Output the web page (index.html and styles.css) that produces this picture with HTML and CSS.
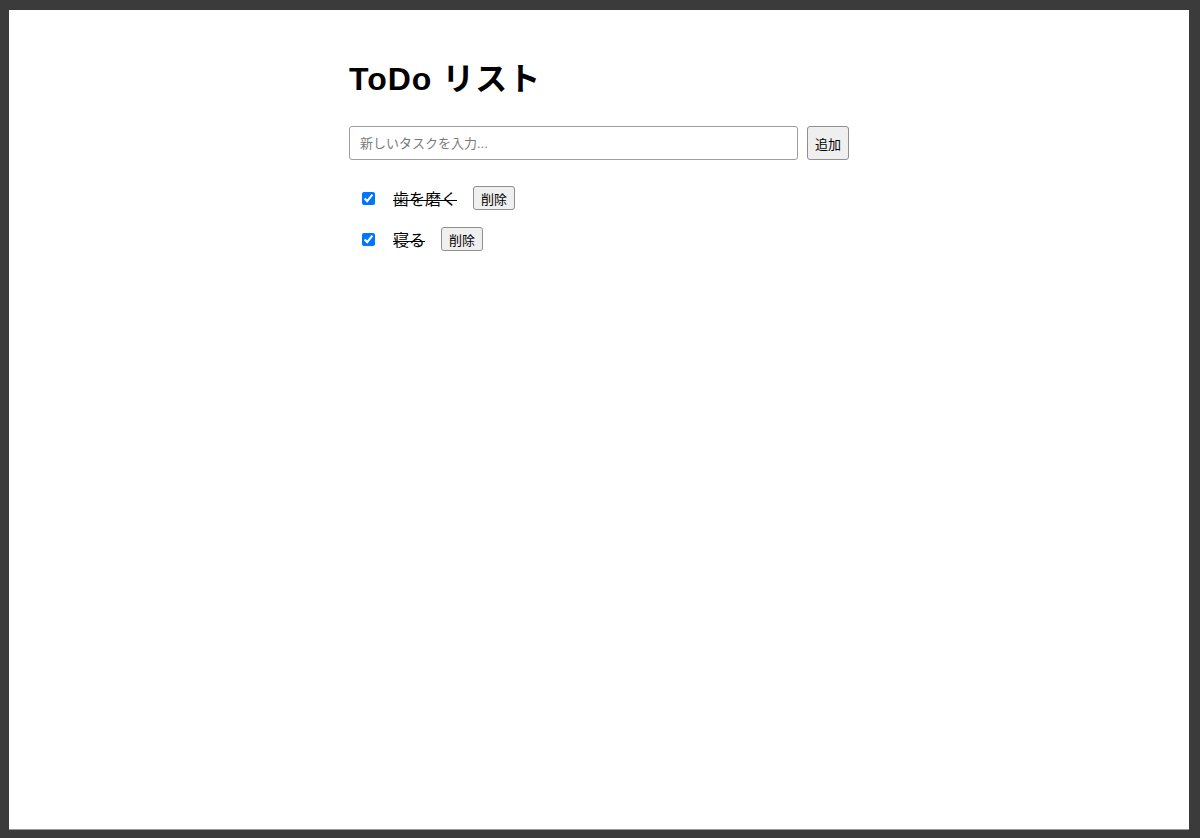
FILE: index.html
```
<!DOCTYPE html>
<html lang="ja">
<head>
    <meta charset="UTF-8">
    <meta name="viewport" content="width=device-width, initial-scale=1.0">
    <title>ToDo リスト</title>
    <link rel="stylesheet" href="styles.css">
</head>
<body>
    <div class="page">
        <div class="container">
            <h1>ToDo リスト</h1>
            <form class="add-form">
                <input type="text" class="task-input" placeholder="新しいタスクを入力...">
                <button type="submit" class="btn add-btn">追加</button>
            </form>
            <ul class="task-list">
                <li class="task">
                    <input type="checkbox" class="task-check" checked>
                    <span class="task-text done">歯を磨く</span>
                    <button class="btn del-btn">削除</button>
                </li>
                <li class="task">
                    <input type="checkbox" class="task-check" checked>
                    <span class="task-text done">寝る</span>
                    <button class="btn del-btn">削除</button>
                </li>
            </ul>
        </div>
    </div>
</body>
</html>
```

FILE: styles.css
```
html, body {
    height: 838px;
}
body {
    margin: 0;
    padding: 10px 11px 8px 9px;
    box-sizing: border-box;
    background-color: #3b3b3b;
    font-family: "Liberation Sans", "Noto Sans CJK JP", sans-serif;
}
.page {
    height: 100%;
    box-sizing: border-box;
    background: white;
    border-bottom: 1px solid #9a9a9a;
}
.container {
    max-width: 500px;
    margin: 0 auto;
    padding-top: 51px;
}
h1 {
    margin: 0 0 28px;
    font-size: 32px;
    line-height: 37px;
    letter-spacing: 1px;
    font-weight: bold;
    color: #000;
}
.add-form {
    display: flex;
    gap: 9px;
    margin: 0 0 26px;
}
.task-input {
    flex: 1;
    height: 34px;
    box-sizing: border-box;
    padding: 0 10px;
    border: 1px solid #9d9d9d;
    border-radius: 3px;
    font-family: "Liberation Sans", "Noto Sans CJK JP", sans-serif;
    font-size: 13px;
}
.task-input::placeholder {
    color: #7a7a7a;
}
.btn {
    font-family: "Liberation Sans", "Noto Sans CJK JP", sans-serif;
    font-size: 13px;
    color: #000;
    background-color: #efefef;
    border: 1px solid #8f8f8f;
    border-radius: 3px;
    box-sizing: border-box;
    padding: 0 7px;
    cursor: pointer;
}
.add-btn {
    width: 42px;
    height: 34px;
}
.task-list {
    list-style: none;
    margin: 0;
    padding: 0 0 0 13px;
}
.task {
    display: flex;
    align-items: center;
    height: 24px;
    margin-bottom: 17px;
}
.task-check {
    width: 13px;
    height: 13px;
    margin: 0 18px 0 0;
}
.task-text {
    font-size: 16px;
    margin-right: 16px;
    color: #000;
}
.task-text.done {
    text-decoration: line-through;
}
.del-btn {
    width: 42px;
    height: 24px;
}
```
